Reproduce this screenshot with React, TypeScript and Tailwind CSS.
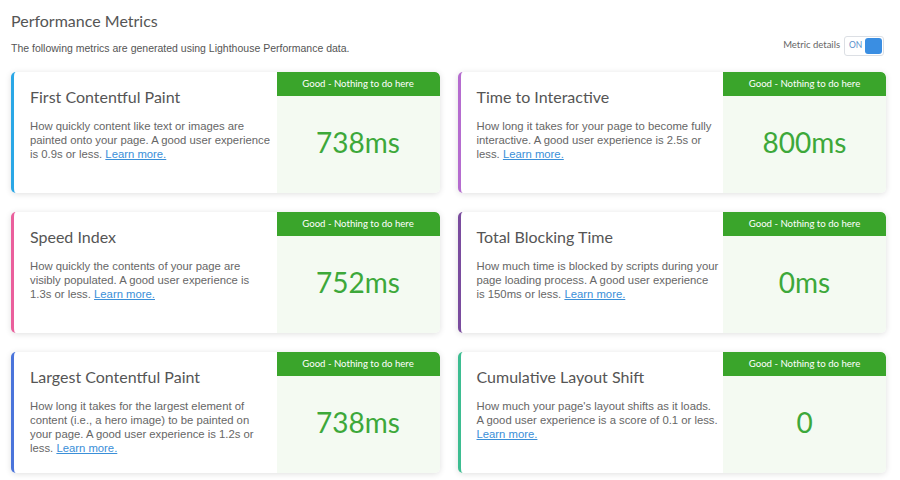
import React from "react";

type Metric = {
  title: string;
  desc: string;
  value: string;
  border: string;
};

const metrics: Metric[] = [
  {
    title: "First Contentful Paint",
    desc: "How quickly content like text or images are painted onto your page. A good user experience is 0.9s or less.",
    value: "738ms",
    border: "border-l-[#2aa7e6]",
  },
  {
    title: "Time to Interactive",
    desc: "How long it takes for your page to become fully interactive. A good user experience is 2.5s or less.",
    value: "800ms",
    border: "border-l-[#b56ccf]",
  },
  {
    title: "Speed Index",
    desc: "How quickly the contents of your page are visibly populated. A good user experience is 1.3s or less.",
    value: "752ms",
    border: "border-l-[#ea5f9c]",
  },
  {
    title: "Total Blocking Time",
    desc: "How much time is blocked by scripts during your page loading process. A good user experience is 150ms or less.",
    value: "0ms",
    border: "border-l-[#7a4c9e]",
  },
  {
    title: "Largest Contentful Paint",
    desc: "How long it takes for the largest element of content (i.e., a hero image) to be painted on your page. A good user experience is 1.2s or less.",
    value: "738ms",
    border: "border-l-[#4a74db]",
  },
  {
    title: "Cumulative Layout Shift",
    desc: "How much your page's layout shifts as it loads. A good user experience is a score of 0.1 or less.",
    value: "0",
    border: "border-l-[#3dbd91]",
  },
];

function Card({ m }: { m: Metric }) {
  return (
    <div
      className={`flex h-[121px] rounded-[5px] bg-white border-l-[3px] ${m.border} shadow-[0_1px_6px_rgba(0,0,0,0.13)] overflow-hidden`}
    >
      <div className="flex-1 pl-[16px] pr-0 pt-[15px]">
        <div className="text-[16px] leading-[20px] text-[#555] font-['Lato',sans-serif]">
          {m.title}
        </div>
        <p className="mt-[12px] text-[11.3px] leading-[14px] text-[#666] font-['Liberation_Sans',Arial,sans-serif] max-w-[243px]">
          {m.desc}{" "}
          <a className="text-[#3a8fd8] underline" href="#">
            Learn more.
          </a>
        </p>
      </div>
      <div className="w-[163px] flex flex-col bg-[#f4faf2]">
        <div className="h-[24px] bg-[#3aa52b] text-white text-[9.6px] flex items-center justify-center font-['Lato',sans-serif] rounded-tr-[5px]">
          Good - Nothing to do here
        </div>
        <div className="flex-1 flex items-center justify-center text-[28px] text-[#3da83a] font-['Lato',sans-serif] pb-[6px]">
          {m.value}
        </div>
      </div>
    </div>
  );
}

export default function App() {
  return (
    <div className="w-[900px] h-[480px] bg-white pl-[11px] pr-[14px] overflow-hidden">
      <div className="pt-[10px] text-[16px] leading-[22px] text-[#555] font-['Lato',sans-serif]">
        Performance Metrics
      </div>
      <div className="flex items-center justify-between mt-[2px] h-[21px]">
        <div className="text-[10.5px] text-[#555] font-['Liberation_Sans',Arial,sans-serif] mt-[8px]">
          The following metrics are generated using Lighthouse Performance data.
        </div>
        <div className="flex items-center gap-[4px] mr-[2px] mt-[2px]">
          <span className="text-[9.5px] text-[#666] font-['Lato',sans-serif]">Metric details</span>
          <div className="w-[40px] h-[20px] border border-[#dcdfe4] rounded-[3px] bg-white flex items-center justify-between pl-[4px] pr-[1px]">
            <span className="text-[8.5px] text-[#5a8fcc] font-['Lato',sans-serif]">ON</span>
            <span className="w-[17px] h-[16px] rounded-[3px] bg-[#3a8ee2]" />
          </div>
        </div>
      </div>
      <div className="grid grid-cols-2 gap-x-[18px] gap-y-[19px] mt-[17px]">
        {metrics.map((m) => (
          <Card key={m.title} m={m} />
        ))}
      </div>
    </div>
  );
}
